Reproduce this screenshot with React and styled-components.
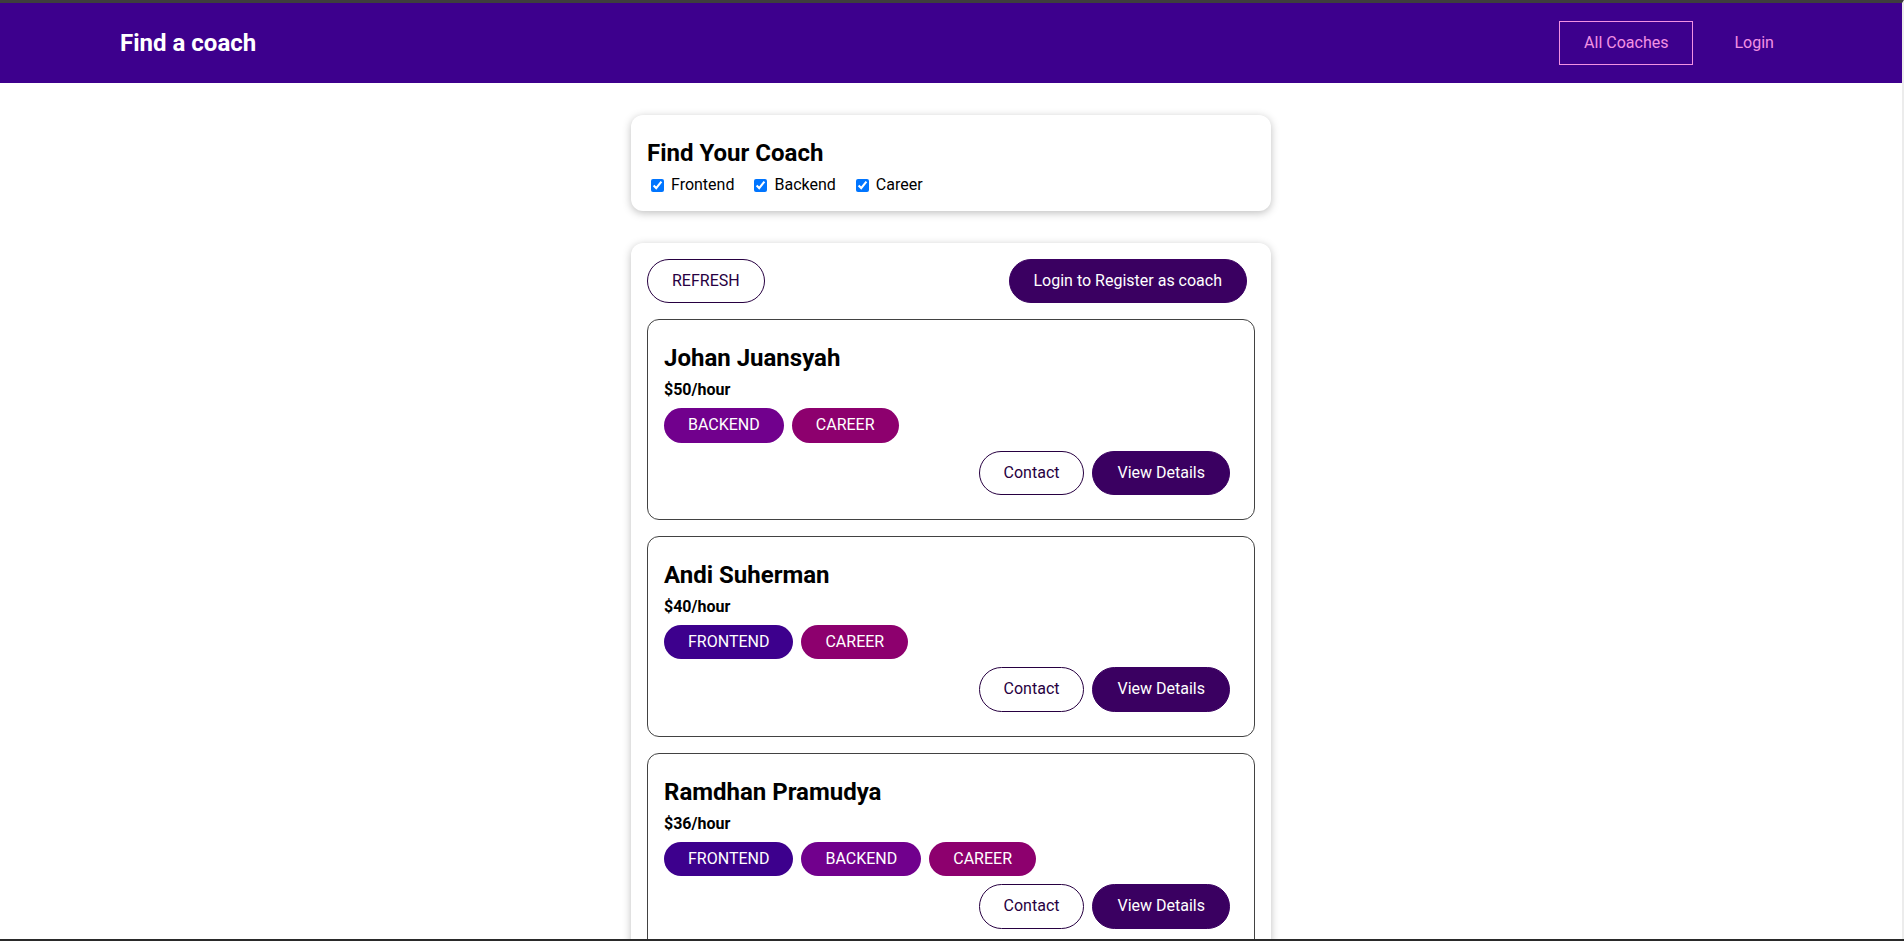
import React, { useState } from "react";
import styled, { createGlobalStyle } from "styled-components";

const GlobalStyle = createGlobalStyle`
  * {
    box-sizing: border-box;
  }
  html {
    font-family: "Roboto", "Liberation Sans", sans-serif;
    line-height: 1.18;
  }
  body {
    margin: 0;
    background-color: white;
  }
`;

const Page = styled.div`
  border-top: 3px solid #3e3e3e;
  border-right: 2px solid #ececec;
  min-height: 100vh;
`;

const BottomEdge = styled.div`
  position: fixed;
  left: 0;
  right: 0;
  bottom: 0;
  height: 2px;
  background-color: #2a2a2a;
  pointer-events: none;
`;

const Header = styled.header`
  width: 100%;
  height: 5rem;
  background-color: #3d008d;
  display: flex;
  justify-content: center;
  align-items: center;

  nav {
    width: 90%;
    margin: auto;
    display: flex;
    justify-content: space-between;
    align-items: center;
  }

  h1 {
    margin: 0;
    font-size: 1.5rem;
  }

  ul {
    list-style: none;
    margin: 0;
    padding: 0;
    display: flex;
    justify-content: center;
    align-items: center;
  }

  li {
    margin: 0 0.5rem;
  }
`;

const NavLink = styled.a`
  text-decoration: none;
  color: ${(p) => (p.$brand ? "white" : "#f391e3")};
  display: inline-block;
  padding: 0.75rem 1.5rem;
  border: 1px solid ${(p) => (p.$active ? "#f391e3" : "transparent")};
  cursor: pointer;
`;

const Card = styled.div`
  border-radius: 12px;
  box-shadow: 0 2px 8px rgba(0, 0, 0, 0.26);
  padding: 1rem;
  margin: 2rem auto;
  max-width: 40rem;
  background-color: white;
`;

const FilterTitle = styled.h2`
  margin: 0.5rem 0;
  font-size: 1.5rem;
`;

const FilterOption = styled.span`
  margin-right: 1rem;

  label,
  input {
    vertical-align: middle;
  }

  label {
    margin-left: 0.25rem;
  }
`;

const Controls = styled.div`
  display: flex;
  justify-content: space-between;
`;

const Button = styled.button`
  text-decoration: none;
  padding: 0.75rem 1.5rem;
  font: inherit;
  background-color: ${(p) => (p.$outline ? "transparent" : "#3a0061")};
  border: 1px solid ${(p) => (p.$outline ? "#270041" : "#3a0061")};
  color: ${(p) => (p.$outline ? "#270041" : "white")};
  cursor: pointer;
  border-radius: 30px;
  margin-right: 0.5rem;
  display: inline-block;
`;

const CoachList = styled.ul`
  list-style: none;
  margin: 0;
  padding: 0;
`;

const CoachItem = styled.li`
  margin: 1rem 0;
  border: 1px solid #424242;
  border-radius: 12px;
  padding: 1rem;

  h3 {
    font-size: 1.5rem;
    margin: 0.5rem 0;
  }

  h4 {
    margin: 0.5rem 0;
    font-size: 1rem;
  }
`;

const Badges = styled.div`
  margin: 0.5rem 0;
`;

const badgeColors = {
  frontend: "#3d008d",
  backend: "#71008d",
  career: "#8d006e",
};

const Badge = styled.span`
  background-color: ${(p) => badgeColors[p.$type] || "#ccc"};
  color: white;
  border-radius: 30px;
  padding: 0.5rem 1.5rem;
  display: inline-block;
  margin-right: 0.5rem;
`;

const Actions = styled.div`
  margin: 0.5rem 0;
  display: flex;
  justify-content: flex-end;
`;

const coaches = [
  { id: "c1", name: "Johan Juansyah", rate: 50, areas: ["backend", "career"] },
  { id: "c2", name: "Andi Suherman", rate: 40, areas: ["frontend", "career"] },
  { id: "c3", name: "Ramdhan Pramudya", rate: 36, areas: ["frontend", "backend", "career"] },
  { id: "c4", name: "Budi Santoso", rate: 30, areas: ["frontend"] },
];

const App = () => {
  const [filters, setFilters] = useState({ frontend: true, backend: true, career: true });

  const toggle = (key) => setFilters((f) => ({ ...f, [key]: !f[key] }));

  const visible = coaches.filter((c) => c.areas.some((a) => filters[a]));

  return (
    <>
      <GlobalStyle />
      <Page>
        <Header>
          <nav>
            <h1>
              <NavLink $brand>Find a coach</NavLink>
            </h1>
            <ul>
              <li>
                <NavLink $active>All Coaches</NavLink>
              </li>
              <li>
                <NavLink>Login</NavLink>
              </li>
            </ul>
          </nav>
        </Header>
        <section>
          <Card>
            <FilterTitle>Find Your Coach</FilterTitle>
            {["frontend", "backend", "career"].map((key) => (
              <FilterOption key={key}>
                <input type="checkbox" id={key} checked={filters[key]} onChange={() => toggle(key)} />
                <label htmlFor={key}>{key[0].toUpperCase() + key.slice(1)}</label>
              </FilterOption>
            ))}
          </Card>
        </section>
        <section>
          <Card>
            <Controls>
              <Button $outline>REFRESH</Button>
              <Button as="a">Login to Register as coach</Button>
            </Controls>
            <CoachList>
              {visible.map((coach) => (
                <CoachItem key={coach.id}>
                  <h3>{coach.name}</h3>
                  <h4>${coach.rate}/hour</h4>
                  <Badges>
                    {coach.areas.map((area) => (
                      <Badge key={area} $type={area}>
                        {area.toUpperCase()}
                      </Badge>
                    ))}
                  </Badges>
                  <Actions>
                    <Button as="a" $outline>
                      Contact
                    </Button>
                    <Button as="a">View Details</Button>
                  </Actions>
                </CoachItem>
              ))}
            </CoachList>
          </Card>
        </section>
        <BottomEdge />
      </Page>
    </>
  );
};

export default App;
